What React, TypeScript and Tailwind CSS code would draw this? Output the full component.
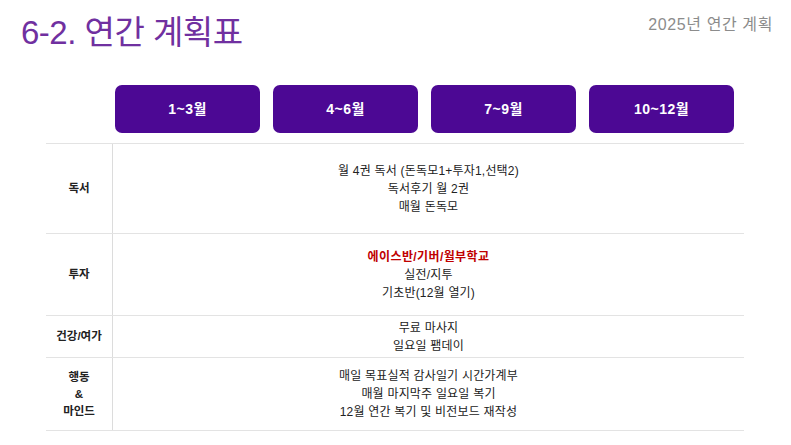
const font = { fontFamily: '"Liberation Sans", "Noto Sans CJK KR", sans-serif' };

const quarters = ['1~3월', '4~6월', '7~9월', '10~12월'];

type Row = { label: string[]; lines: { text: string; red?: boolean }[]; h: string };

const rows: Row[] = [
  {
    label: ['독서'],
    h: 'h-[90px]',
    lines: [
      { text: '월 4권 독서 (돈독모1+투자1,선택2)' },
      { text: '독서후기 월 2권' },
      { text: '매월 돈독모' },
    ],
  },
  {
    label: ['투자'],
    h: 'h-[82px]',
    lines: [
      { text: '에이스반/기버/월부학교', red: true },
      { text: '실전/지투' },
      { text: '기초반(12월 열기)' },
    ],
  },
  {
    label: ['건강/여가'],
    h: 'h-[42px]',
    lines: [{ text: '무료 마사지' }, { text: '일요일 팸데이' }],
  },
  {
    label: ['행동', '&', '마인드'],
    h: 'h-[73px]',
    lines: [
      { text: '매일 목표실적 감사일기 시간가계부' },
      { text: '매월 마지막주 일요일 복기' },
      { text: '12월 연간 복기 및 비전보드 재작성' },
    ],
  },
];

export default function App() {
  return (
    <div className="w-[791px] h-[445px] bg-white overflow-hidden relative" style={font}>
      {/* Header */}
      <div className="flex items-start justify-between pl-[21px] pr-[18px] pt-[11px]">
        <h1 className="text-[33px] leading-[44px] text-[#7030a0] tracking-[-0.5px]">6-2. 연간 계획표</h1>
        <div className="text-[16px] text-[#8c8c8c] mt-[2px] tracking-[0.6px]">2025년 연간 계획</div>
      </div>

      {/* Quarter buttons */}
      <div className="flex gap-[13px] pl-[115px] mt-[30px]">
        {quarters.map((q) => (
          <div
            key={q}
            className="w-[145px] h-[48px] rounded-[7px] bg-[#4c0894] flex items-center justify-center text-white text-[14px] font-bold tracking-[0.5px]"
          >
            {q}
          </div>
        ))}
      </div>

      {/* Table */}
      <div className="ml-[46px] mt-[10px] w-[698px] border-t border-[#e3e3e3]">
        {rows.map((r, i) => (
          <div key={i} className={`flex border-b border-[#e3e3e3] ${r.h}`}>
            <div className="w-[67px] shrink-0 border-r border-[#dcdcdc] flex flex-col items-center justify-center text-[11.5px] font-bold text-[#222] leading-[17px]">
              {r.label.map((l) => (
                <div key={l}>{l}</div>
              ))}
            </div>
            <div className="flex-1 flex flex-col items-center justify-center text-[12px] leading-[18px] text-[#222] tracking-[0.2px]">
              {r.lines.map((l) => (
                <div key={l.text} className={l.red ? 'text-[#c00000] font-bold tracking-[0.4px]' : ''}>
                  {l.text}
                </div>
              ))}
            </div>
          </div>
        ))}
      </div>
    </div>
  );
}
